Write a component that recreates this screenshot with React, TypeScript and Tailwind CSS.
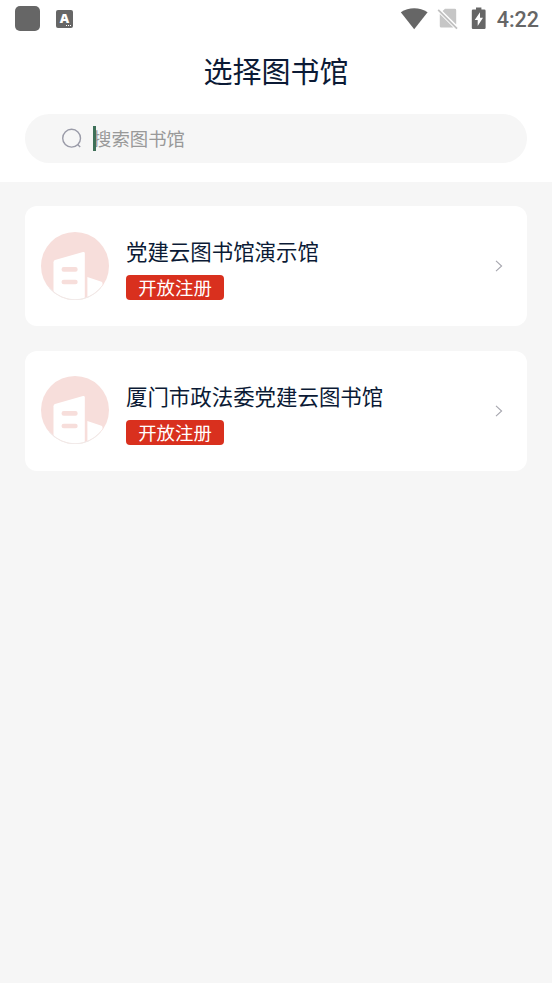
import React, { useState } from 'react';

interface Library {
  id: number;
  name: string;
  tag: string;
}

const libraries: Library[] = [
  { id: 1, name: '党建云图书馆演示馆', tag: '开放注册' },
  { id: 2, name: '厦门市政法委党建云图书馆', tag: '开放注册' },
];

const StatusBar: React.FC = () => (
  <div className="flex h-[37px] items-center justify-between pl-[15px] pr-[13px] text-[#666666]">
    <div className="flex items-center gap-[16px]">
      <div className="h-[25px] w-[25px] rounded-[5px] bg-[#666666]" />
      <div className="flex h-[18px] w-[17px] flex-col rounded-[2px] bg-[#666666]">
        <span className="pt-px text-center font-['Open_Sans',sans-serif] text-[13px] font-extrabold leading-[14px] text-white">A</span>
        <div className="flex justify-end gap-px pr-[2px]">
          <i className="h-px w-px bg-white" />
          <i className="h-px w-px bg-white" />
          <i className="h-px w-px bg-white" />
        </div>
      </div>
    </div>
    <div className="flex items-center">
      <svg width="28" height="22" viewBox="0 0 28 22">
        <path d="M0.8 4.2C8.7-1 19.7-1 27.6 4.2L14.2 21.2Z" fill="currentColor" />
      </svg>
      <svg className="ml-[9px]" width="21" height="22" viewBox="0 0 21 22">
        <path d="M8 0.8H17.8a1.4 1.4 0 0 1 1.4 1.4V16.6L5.6 3ZM2.8 6 16.4 19.6H4.2a1.4 1.4 0 0 1-1.4-1.4Z" fill="#c6c6c6" />
        <path d="M1.2 1.8 20 20.6" stroke="#c0c0c0" strokeWidth="1.8" />
      </svg>
      <svg className="ml-[13px]" width="15" height="23" viewBox="0 0 15 23">
        <path d="M5 0.5h5.4v2h3a1.2 1.2 0 0 1 1.2 1.2V20.7a1.2 1.2 0 0 1-1.2 1.2H2A1.2 1.2 0 0 1 .8 20.7V3.7A1.2 1.2 0 0 1 2 2.5h3Z" fill="currentColor" />
        <path d="M9 5.2V10.8h3L6.7 19v-6h-3Z" fill="#fff" />
      </svg>
      <span className="ml-[11px] pt-[2px] font-[Roboto,sans-serif] text-[21.5px] font-medium leading-none">4:22</span>
    </div>
  </div>
);

const LibraryLogo: React.FC = () => (
  <svg className="mb-px shrink-0" width="68" height="68" viewBox="0 0 68 68">
    <defs>
      <clipPath id="logo-clip">
        <circle cx="34" cy="34" r="33.4" />
      </clipPath>
    </defs>
    <circle cx="34" cy="34" r="34" fill="#f7dedb" />
    <g clipPath="url(#logo-clip)">
      <path d="M12.5 70V30.2Q12.5 28.6 14 28L42 20Q43.8 19.6 43.8 21.4V70Z" fill="#fff" />
      <path d="M46.4 70V45L60.5 49.8Q61.6 50.4 61.6 52V70Z" fill="#fff" />
      <path d="M22.8 37.4H34.4M22.8 50H34.4" stroke="#f7dedb" strokeWidth="4.6" strokeLinecap="round" />
    </g>
    <path d="M8 55.5A33.6 33.6 0 0 0 60 55.5" fill="none" stroke="#eeeae9" strokeWidth="0.9" />
  </svg>
);

const LibraryCard: React.FC<{ library: Library }> = ({ library }) => (
  <button className="flex h-[120px] w-full items-center rounded-xl bg-white pl-4 pr-[23px] text-left">
    <LibraryLogo />
    <div className="ml-[17px] flex-1 pt-[4px]">
      <h2 className="text-[21.45px] leading-[30px] text-[#0b1a35]">{library.name}</h2>
      <span className="mt-[9px] flex h-[25px] w-[98px] items-center justify-center rounded-[4px] bg-[#d9301e] text-[18.4px] leading-none text-white">
        {library.tag}
      </span>
    </div>
    <svg width="10" height="14" viewBox="0 0 10 14">
      <path d="M2 1.8 7.6 7 2 12.2" fill="none" stroke="#a6a6ae" strokeWidth="1.1" />
    </svg>
  </button>
);

export default function App() {
  const [keyword, setKeyword] = useState('');

  return (
    <div className="min-h-screen bg-[#f6f6f6] font-['Noto_Sans_CJK_SC',sans-serif]">
      <header className="h-[182px] bg-white">
        <StatusBar />
        <h1 className="pt-[12px] text-center text-[29px] leading-[42px] text-[#0b1a35]">选择图书馆</h1>
        <div className="mx-[25px] mt-[23px] flex h-[49px] items-center rounded-full bg-[#f6f6f6] pl-[36px]">
          <svg width="22" height="22" viewBox="0 0 22 22" fill="none" stroke="#9a9ba8" strokeWidth="1.4">
            <circle cx="10.6" cy="10.2" r="8.9" />
            <path d="m16.6 16.4 2.6 2.6" />
          </svg>
          <div className="relative ml-[10px] flex-1">
            <input
              type="text"
              value={keyword}
              onChange={(e) => setKeyword(e.target.value)}
              placeholder="搜索图书馆"
              className="block h-[30px] w-full bg-transparent pb-[2px] text-[18.4px] text-[#333333] caret-[#3e7058] outline-none placeholder:text-[#999999]"
            />
            <span className="absolute left-0 top-[2px] h-[25px] w-[3px] bg-[#3e7058]" />
          </div>
        </div>
      </header>

      <main className="flex flex-col gap-[24.6px] px-[25px] pt-[24px]">
        {libraries.map((library) => (
          <LibraryCard key={library.id} library={library} />
        ))}
      </main>
    </div>
  );
}
